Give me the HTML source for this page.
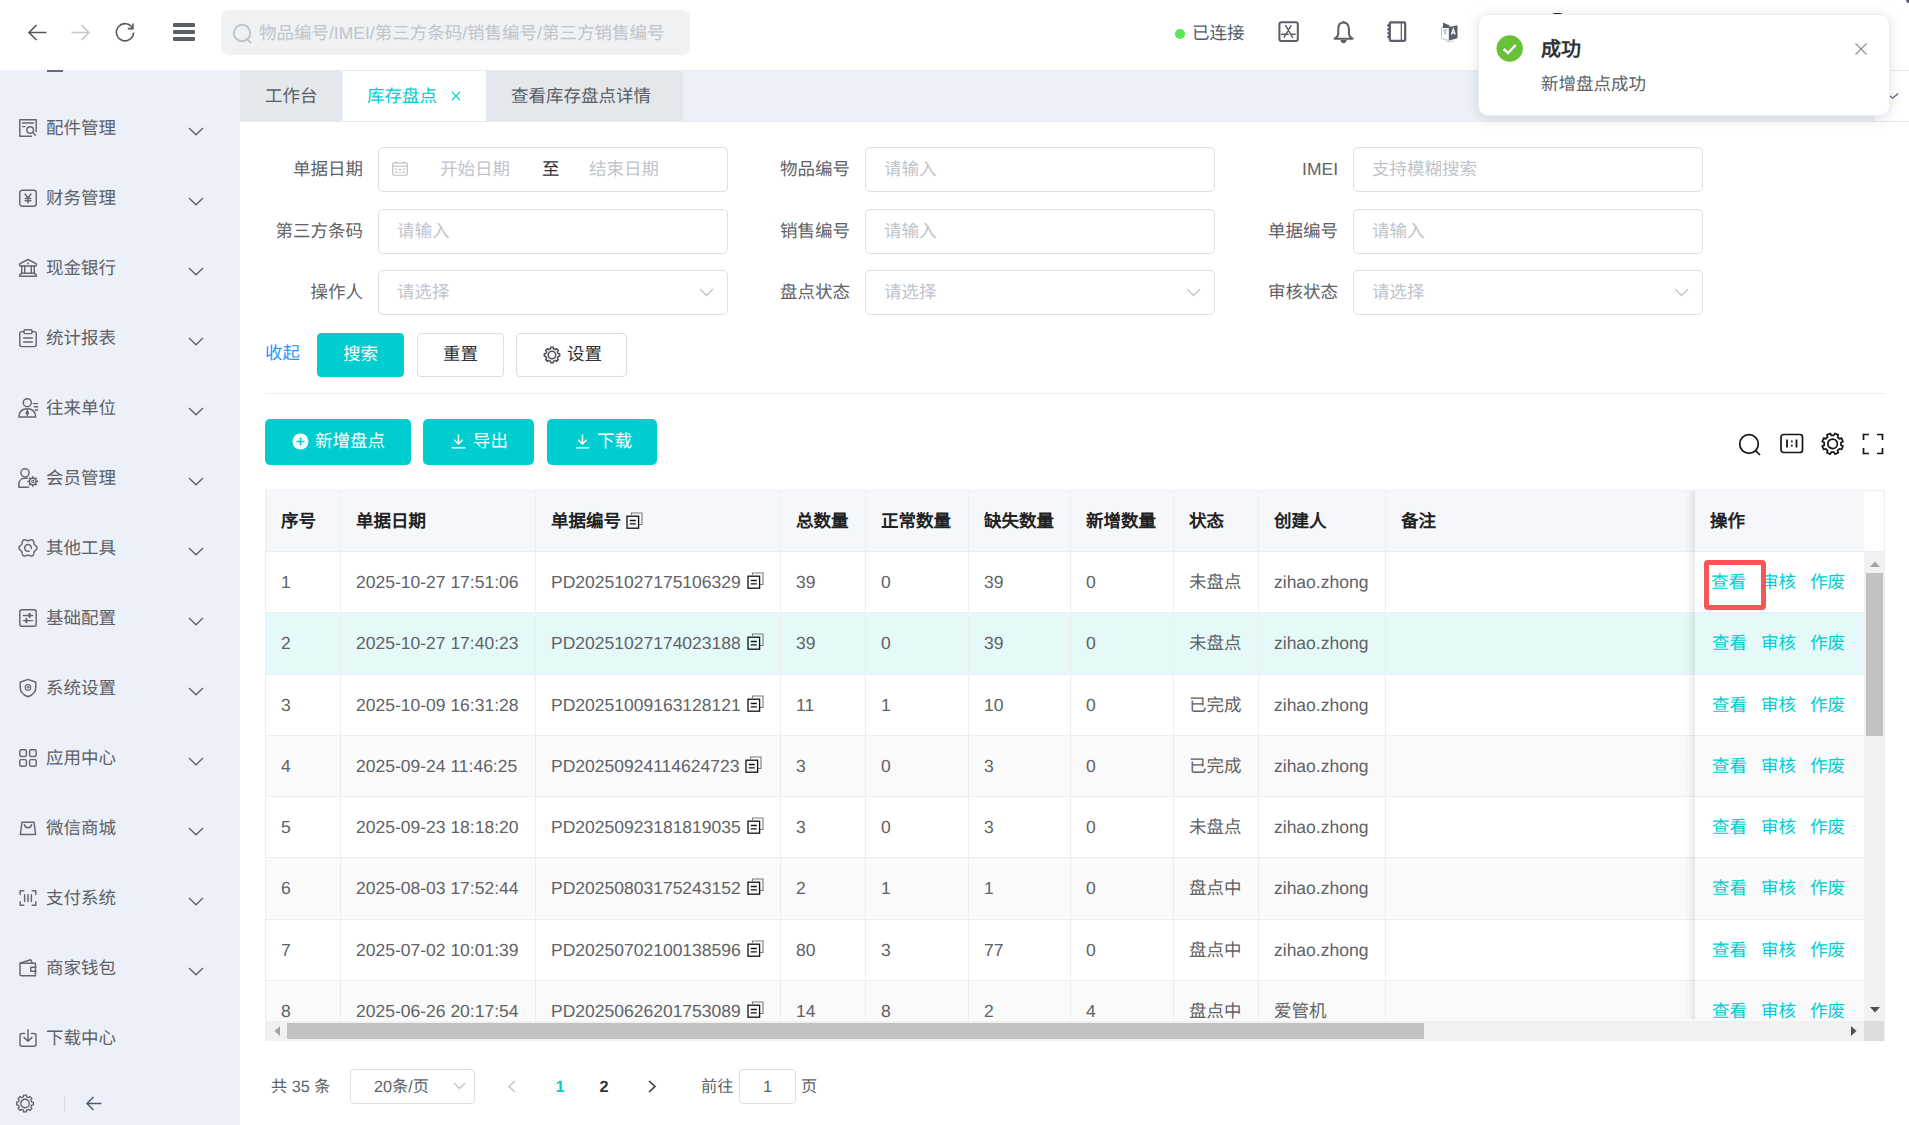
<!DOCTYPE html><html lang="zh-CN"><head><meta charset="utf-8"><title>page</title><style>
*{box-sizing:border-box;margin:0;padding:0}
html,body{width:1909px;height:1125px;overflow:hidden;background:#fff}
body{font-family:"Liberation Sans",sans-serif;font-size:17.5px;color:#606266;position:relative;text-rendering:geometricPrecision}
.abs{position:absolute}
svg{display:block;overflow:visible}
.nw{white-space:nowrap}
#top{position:absolute;left:0;top:0;width:1909px;height:70px;background:#fff}
#side{position:absolute;left:0;top:70px;width:240px;height:1055px;background:#ecf0f8}
#tabs{position:absolute;left:240px;top:70px;width:1669px;height:52px;background:#ecf0f8;border-top:1px solid #e9ebef;border-bottom:1px solid #e6e9ed}
.tab{position:absolute;top:0;height:50px;line-height:50px;font-size:17.5px;color:#595d66;background:#e4e8ed;white-space:nowrap}
.tab.act{background:#fff;color:#00cdd0}
.mi{position:absolute;left:0;width:240px;height:30px}
.mi .t{position:absolute;left:46px;top:0;line-height:30px;font-size:17.5px;color:#5d6066;white-space:nowrap}
.mi svg.ic{position:absolute;left:18px;top:5px}
.mi svg.ch{position:absolute;left:188px;top:13.500px}
.lbl{position:absolute;width:160px;text-align:right;font-size:17.5px;color:#606266;line-height:45px;white-space:nowrap}
.inp{position:absolute;width:350px;height:45px;border:1px solid #dcdfe6;border-radius:5px;background:#fff;font-size:17.5px;color:#c0c4cc;line-height:43px;padding-left:18px;white-space:nowrap}
.btn{position:absolute;top:333px;height:44px;border-radius:4px;font-size:17.5px;line-height:40px;white-space:nowrap}
.btn.pri{background:#00cdd0;color:#fff;border:1px solid #00cdd0}
.btn.def{background:#fff;color:#303133;border:1px solid #dcdfe6}
.btn2{position:absolute;top:419px;height:46px;border-radius:5px;background:#00cdd0;color:#fff;font-size:17.5px;line-height:45px;white-space:nowrap}
#tbl{position:absolute;left:265px;top:490px;width:1620px;height:551px;overflow:hidden;border:1px solid #ebeef5;border-bottom:none}
.row{position:absolute;left:0;width:1618px;border-bottom:1px solid #ebeef5;background:#fff}
.row.s{background:#fafafa}
.row.h{background:#e6f9f9}
.c{position:absolute;top:0;height:100%;border-left:1px solid #ebeef5;padding-left:15px;white-space:nowrap;color:#606266;overflow:hidden}
.c.f{border-left:none}
.hd{background:#f5f7fa !important}
.hd .c{color:#222;font-weight:bold;line-height:60px}
.bd .c{line-height:60px}
.lk{color:#00cdd0;position:absolute;top:0}
.cp{display:inline-block;vertical-align:-1px;margin-left:6px}
.pg{position:absolute;font-size:16.25px;line-height:35px;top:1070px;white-space:nowrap;color:#606266}
</style></head><body>
<div id="top">
<svg class="abs" style="left:28px;top:24px" width="19" height="17" viewBox="0 0 19 17"><path d="M18.5 8.5H1M8.500 1L1 8.500L8.500 16" fill="none" stroke="#56585e" stroke-width="1.600"/></svg>
<svg class="abs" style="left:71px;top:24px" width="19" height="17" viewBox="0 0 19 17"><path d="M0.5 8.500H18M10.500 1L18 8.500L10.500 16" fill="none" stroke="#c5c8ce" stroke-width="1.6"/></svg>
<svg class="abs" style="left:115px;top:22px" width="20" height="20" viewBox="0 0 20 20"><path d="M17.600 6.200A8.600 8.600 0 1 0 18.600 10.500" fill="none" stroke="#56585e" stroke-width="1.600"/><path d="M17.900 1.500V6.600H12.800" fill="none" stroke="#56585e" stroke-width="1.600"/></svg>
<div class="abs" style="left:173px;top:23px;width:22px;height:4px;background:#5a5e66;border-radius:1px"></div>
<div class="abs" style="left:173px;top:30px;width:22px;height:4px;background:#5a5e66;border-radius:1px"></div>
<div class="abs" style="left:173px;top:37px;width:22px;height:4px;background:#5a5e66;border-radius:1px"></div>
<div class="abs" style="left:221px;top:10px;width:469px;height:45px;background:#f0f1f3;border-radius:8px"></div>
<svg class="abs" style="left:232px;top:23px" width="22" height="22" viewBox="0 0 22 22"><circle cx="10" cy="10" r="8.200" fill="none" stroke="#c0c4cc" stroke-width="2"/><path d="M15.500 16.500L19 20" stroke="#c0c4cc" stroke-width="2" fill="none"/></svg>
<div class="abs nw" style="left:259px;top:11px;line-height:44px;font-size:17.5px;color:#c0c4cc">物品编号/IMEI/第三方条码/销售编号/第三方销售编号</div>
<div class="abs" style="left:1175px;top:29px;width:10px;height:10px;border-radius:5px;background:#55e955"></div>
<div class="abs nw" style="left:1192px;top:18px;line-height:30px;font-size:17.5px;color:#515a6e">已连接</div>
<svg class="abs" style="left:1278px;top:21px" width="21" height="21" viewBox="0 0 21 21"><g fill="none" stroke="#5a5e66" stroke-width="2" stroke-linejoin="round" stroke-linecap="round"><rect x="1.400" y="1.200" width="18.400" height="18.700" rx="2"/><path d="M7.700 4.600L14.500 16.100M13 4.600L6.200 16.100M3.500 13.300H10.200M13.200 13.300H17.200" stroke-width="1.500"/></g></svg>
<svg class="abs" style="left:1333px;top:21px" width="21" height="23" viewBox="0 0 21 23"><g fill="none" stroke="#5a5e66" stroke-width="2" stroke-linejoin="round" stroke-linecap="round"><path d="M10.600 1.600C6.800 1.600 5.300 4.800 5.300 8V12.800C5.300 14.800 3.800 16.300 1.600 17.700H19.600C17.400 16.300 15.900 14.800 15.900 12.800V8C15.900 4.800 14.400 1.600 10.600 1.600Z"/><path d="M10.600 0.500V1.500" stroke-width="1.600"/></g><path d="M7.400 19H13.800C13.300 21.300 12 22.300 10.600 22.300C9.200 22.300 7.900 21.300 7.400 19Z" fill="#5a5e66"/></svg>
<svg class="abs" style="left:1386px;top:21px" width="21" height="21" viewBox="0 0 21 21"><g fill="none" stroke="#5a5e66" stroke-width="2" stroke-linejoin="round" stroke-linecap="round"><rect x="3.800" y="1.300" width="15.400" height="18.500" rx="1" stroke-width="2.200"/><path d="M15.300 1.500V19.500" stroke-width="1.200"/></g><g fill="#5a5e66"><circle cx="2.600" cy="4.500" r="1.400"/><circle cx="2.600" cy="8.300" r="1.400"/><circle cx="2.600" cy="12.100" r="1.400"/><circle cx="2.600" cy="15.900" r="1.400"/></g></svg>
<svg class="abs" style="left:1440px;top:22px" width="19" height="20" viewBox="0 0 19 20"><path d="M1.500 5L9 3V18.500L1.500 16.500Z" fill="#fff" stroke="#c4c7ce" stroke-width="1"/><path d="M3 0.500L9.500 3.500V6H3Z" fill="#5a5e66"/><path d="M9 5L17.500 3.200V16.200L9 18.600Z" fill="#5a5e66"/><path d="M11.400 12.500L13.300 6.800L15.200 12.500M12 10.800H14.600" fill="none" stroke="#fff" stroke-width="1.200"/><path d="M3.200 8H7M5 7V8M3.600 12C5.200 11 6 9.500 6.200 8M3.800 9C4.400 10.500 5.400 11.500 6.800 12" fill="none" stroke="#a0a4ac" stroke-width="0.800"/><path d="M5 19C8 20 11 20 14 19" fill="none" stroke="#c4c7ce" stroke-width="0.800"/></svg>
<div class="abs" style="left:1552px;top:13px;width:11px;height:3px;border-radius:5px 5px 0 0;background:#2b2f3a"></div>
<div class="abs" style="left:1906px;top:0;width:3px;height:3px;border-radius:0 0 0 3px;background:#5a5e66"></div>
</div>
<div id="side">
<div class="abs" style="left:47px;top:0;width:16px;height:2px;background:#666a73"></div>
<div class="mi" style="top:43px"><svg class="ic" style="" width="20" height="20" viewBox="0 0 20 20"><g fill="none" stroke="#63676e" stroke-width="1.450" stroke-linejoin="round" stroke-linecap="round"><path d="M13.400 18.200H1.800V1.800H18.200V13.500"/><path d="M4.5 5H15.5"/><path d="M4.5 8.6H7"/><circle cx="12.2" cy="12" r="3.3"/><path d="M14.800 14.600L17.400 17.200"/></g></svg><div class="t">配件管理</div><svg class="ch" width="16" height="9" viewBox="0 0 16 9"><path d="M1 1L8 7.800L15 1" fill="none" stroke="#5d6066" stroke-width="1.300"/></svg></div>
<div class="mi" style="top:113px"><svg class="ic" style="" width="20" height="20" viewBox="0 0 20 20"><g fill="none" stroke="#63676e" stroke-width="1.450" stroke-linejoin="round" stroke-linecap="round"><rect x="1.8" y="2.2" width="16.4" height="16" rx="2.5"/><path d="M7 6L10 10L13 6M10 10V15M7.2 10.4H12.8M7.2 12.8H12.8"/></g></svg><div class="t">财务管理</div><svg class="ch" width="16" height="9" viewBox="0 0 16 9"><path d="M1 1L8 7.800L15 1" fill="none" stroke="#5d6066" stroke-width="1.300"/></svg></div>
<div class="mi" style="top:183px"><svg class="ic" style="" width="20" height="20" viewBox="0 0 20 20"><g fill="none" stroke="#63676e" stroke-width="1.450" stroke-linejoin="round" stroke-linecap="round"><path d="M10 1.500L2 5.700C1.100 6.200 1.300 7.900 2.400 8H17.600C18.700 7.900 18.900 6.200 18 5.700Z"/><path d="M3.700 7.800V15.200M6.700 7.800V15.200M13.300 7.800V15.200M16.300 7.800V15.200"/><path d="M3.700 15.200H16.300"/><path d="M3.700 15.300L1.700 16.800V18.300H18.300V16.800L16.300 15.300"/><path d="M10 5V5.800" stroke-width="1.600"/></g></svg><div class="t">现金银行</div><svg class="ch" width="16" height="9" viewBox="0 0 16 9"><path d="M1 1L8 7.800L15 1" fill="none" stroke="#5d6066" stroke-width="1.300"/></svg></div>
<div class="mi" style="top:253px"><svg class="ic" style="" width="20" height="20" viewBox="0 0 20 20"><g fill="none" stroke="#63676e" stroke-width="1.450" stroke-linejoin="round" stroke-linecap="round"><path d="M6 3.6H3.8C2.7 3.6 1.8 4.5 1.8 5.6V16.6C1.8 17.7 2.7 18.6 3.8 18.6H16.2C17.3 18.6 18.2 17.7 18.2 16.6V5.6C18.2 4.5 17.3 3.6 16.2 3.6H14"/><rect x="6" y="1.8" width="8" height="3.8" rx="0.8"/><path d="M5.6 10H14.4M5.6 14H14.4"/></g></svg><div class="t">统计报表</div><svg class="ch" width="16" height="9" viewBox="0 0 16 9"><path d="M1 1L8 7.800L15 1" fill="none" stroke="#5d6066" stroke-width="1.300"/></svg></div>
<div class="mi" style="top:323px"><svg class="ic" style="" width="20" height="20" viewBox="0 0 20 20"><g fill="none" stroke="#63676e" stroke-width="1.450" stroke-linejoin="round" stroke-linecap="round"><circle cx="9.3" cy="4.7" r="4"/><path d="M0.9 19C1.1 14 4.1 10.7 9.3 10.7C14.5 10.7 17.500 14 17.700 19Z"/><path d="M9.300 11.500V18M8 14.800L9.300 12.800L10.600 14.800L9.300 16.800Z" stroke-width="1.200"/><path d="M15.300 5.600H19.600M16.300 8.800H19.600M17.300 12H19.600"/></g></svg><div class="t">往来单位</div><svg class="ch" width="16" height="9" viewBox="0 0 16 9"><path d="M1 1L8 7.800L15 1" fill="none" stroke="#5d6066" stroke-width="1.300"/></svg></div>
<div class="mi" style="top:393px"><svg class="ic" style="" width="20" height="20" viewBox="0 0 20 20"><g fill="none" stroke="#63676e" stroke-width="1.450" stroke-linejoin="round" stroke-linecap="round"><circle cx="7" cy="4.800" r="4.100"/><path d="M10.400 19.200H0.900V16.200C0.900 12.800 3.300 10.300 6.800 10.300H9.200"/><circle cx="14.800" cy="13.400" r="3.300"/><circle cx="14.800" cy="13.400" r="1.100" stroke-width="1.100"/><path d="M14.800 8.800V10M14.800 16.800V18M10.200 13.400H11.400M18.200 13.400H19.400M11.550 10.150L12.400 11M17.200 15.800L18.050 16.650M11.550 16.650L12.400 15.800M17.200 11L18.050 10.150" stroke-width="1.700"/></g></svg><div class="t">会员管理</div><svg class="ch" width="16" height="9" viewBox="0 0 16 9"><path d="M1 1L8 7.800L15 1" fill="none" stroke="#5d6066" stroke-width="1.300"/></svg></div>
<div class="mi" style="top:463px"><svg class="ic" style="" width="20" height="20" viewBox="0 0 20 20"><g fill="none" stroke="#63676e" stroke-width="1.450" stroke-linejoin="round" stroke-linecap="round"><path d="M19.10 9.90L18.87 10.83L18.26 11.66L17.47 12.33L16.74 12.90L16.24 13.50L15.97 14.24L15.84 15.16L15.65 16.17L15.24 17.12L14.55 17.78L13.63 18.05L12.61 17.93L11.63 17.58L10.77 17.24L10.00 17.10L9.23 17.24L8.37 17.58L7.39 17.93L6.37 18.05L5.45 17.78L4.76 17.12L4.35 16.17L4.16 15.16L4.03 14.24L3.76 13.50L3.26 12.90L2.53 12.33L1.74 11.66L1.13 10.83L0.90 9.90L1.13 8.97L1.74 8.14L2.53 7.47L3.26 6.90L3.76 6.30L4.03 5.56L4.16 4.64L4.35 3.63L4.76 2.68L5.45 2.02L6.37 1.75L7.39 1.87L8.37 2.22L9.23 2.56L10.00 2.70L10.77 2.56L11.63 2.22L12.61 1.87L13.63 1.75L14.55 2.02L15.24 2.68L15.65 3.63L15.84 4.64L15.97 5.56L16.24 6.30L16.74 6.90L17.47 7.47L18.26 8.14L18.87 8.97Z"/><path d="M11.16 13.09A3.400 3.400 0 1 1 13.35 10.49"/></g></svg><div class="t">其他工具</div><svg class="ch" width="16" height="9" viewBox="0 0 16 9"><path d="M1 1L8 7.800L15 1" fill="none" stroke="#5d6066" stroke-width="1.300"/></svg></div>
<div class="mi" style="top:533px"><svg class="ic" style="" width="20" height="20" viewBox="0 0 20 20"><g fill="none" stroke="#63676e" stroke-width="1.450" stroke-linejoin="round" stroke-linecap="round"><rect x="1.8" y="1.8" width="16.4" height="16.4" rx="2"/><path d="M5.4 7.4H14.6M5.4 12.6H14.6"/><path d="M11.6 5.8V9M8.4 11V14.2" stroke-width="2.2"/></g></svg><div class="t">基础配置</div><svg class="ch" width="16" height="9" viewBox="0 0 16 9"><path d="M1 1L8 7.800L15 1" fill="none" stroke="#5d6066" stroke-width="1.300"/></svg></div>
<div class="mi" style="top:603px"><svg class="ic" style="" width="20" height="20" viewBox="0 0 20 20"><g fill="none" stroke="#63676e" stroke-width="1.450" stroke-linejoin="round" stroke-linecap="round"><path d="M10 1.4L17.8 4.2V9.4C17.8 14 14.6 17 10 18.8C5.400 17 2.2 14 2.2 9.4V4.200Z"/><circle cx="10" cy="9.400" r="2.8" stroke-width="1.1"/><circle cx="10" cy="9.400" r="0.9" stroke-width="1"/></g></svg><div class="t">系统设置</div><svg class="ch" width="16" height="9" viewBox="0 0 16 9"><path d="M1 1L8 7.800L15 1" fill="none" stroke="#5d6066" stroke-width="1.300"/></svg></div>
<div class="mi" style="top:673px"><svg class="ic" style="" width="20" height="20" viewBox="0 0 20 20"><g fill="none" stroke="#63676e" stroke-width="1.450" stroke-linejoin="round" stroke-linecap="round"><rect x="1.8" y="1.8" width="6.6" height="6.600" rx="1.4"/><rect x="11.6" y="1.8" width="6.6" height="6.6" rx="1.4"/><rect x="1.8" y="11.6" width="6.6" height="6.6" rx="1.4"/><rect x="11.6" y="11.6" width="6.6" height="6.6" rx="1.4"/></g></svg><div class="t">应用中心</div><svg class="ch" width="16" height="9" viewBox="0 0 16 9"><path d="M1 1L8 7.800L15 1" fill="none" stroke="#5d6066" stroke-width="1.300"/></svg></div>
<div class="mi" style="top:743px"><svg class="ic" style="" width="20" height="20" viewBox="0 0 20 20"><g fill="none" stroke="#63676e" stroke-width="1.450" stroke-linejoin="round" stroke-linecap="round"><path d="M4 4.200H16L17.600 16.400H2.400Z"/><path d="M6.400 6.800C7 8.800 8.200 9.800 10 9.800C11.800 9.800 13 8.800 13.600 6.800"/></g></svg><div class="t">微信商城</div><svg class="ch" width="16" height="9" viewBox="0 0 16 9"><path d="M1 1L8 7.800L15 1" fill="none" stroke="#5d6066" stroke-width="1.300"/></svg></div>
<div class="mi" style="top:813px"><svg class="ic" style="" width="20" height="20" viewBox="0 0 20 20"><g fill="none" stroke="#63676e" stroke-width="1.450" stroke-linejoin="round" stroke-linecap="round"><path d="M2.200 6.400V2.800H5.800M14.200 2.800H17.800V6.400M17.800 13.600V17.200H14.200M5.800 17.200H2.200V13.600"/><path d="M6.600 6.600V13.400M10 6.600V13.400M13.400 6.600V13.400"/></g></svg><div class="t">支付系统</div><svg class="ch" width="16" height="9" viewBox="0 0 16 9"><path d="M1 1L8 7.800L15 1" fill="none" stroke="#5d6066" stroke-width="1.300"/></svg></div>
<div class="mi" style="top:883px"><svg class="ic" style="" width="20" height="20" viewBox="0 0 20 20"><g fill="none" stroke="#63676e" stroke-width="1.450" stroke-linejoin="round" stroke-linecap="round"><path d="M2 5.200H17.400V17.800H3.400C2.600 17.800 2 17.200 2 16.400Z"/><path d="M2.400 5L12.800 1.800L14.200 5"/><path d="M18 9.200H12.800V13.200H18"/></g></svg><div class="t">商家钱包</div><svg class="ch" width="16" height="9" viewBox="0 0 16 9"><path d="M1 1L8 7.800L15 1" fill="none" stroke="#5d6066" stroke-width="1.300"/></svg></div>
<div class="mi" style="top:953px"><svg class="ic" style="" width="20" height="20" viewBox="0 0 20 20"><g fill="none" stroke="#63676e" stroke-width="1.450" stroke-linejoin="round" stroke-linecap="round"><path d="M6.600 5.400H4C2.900 5.400 2 6.300 2 7.400V16.200C2 17.300 2.900 18.200 4 18.200H16C17.100 18.200 18 17.300 18 16.200V7.400C18 6.300 17.100 5.400 16 5.400H13.400"/><path d="M10 1.800V13M6 9.400L10 13.200L14 9.400"/></g></svg><div class="t">下载中心</div></div>
<svg class="abs" style="left:15px;top:1023px" width="20" height="20" viewBox="0 0 20 20"><path d="M8.54 2.13L11.46 2.13L11.59 3.89L13.55 4.70L14.89 3.55L16.95 5.61L15.80 6.95L16.61 8.91L18.37 9.04L18.37 11.96L16.61 12.09L15.80 14.05L16.95 15.39L14.89 17.45L13.55 16.30L11.59 17.11L11.46 18.87L8.54 18.87L8.41 17.11L6.45 16.30L5.11 17.45L3.05 15.39L4.20 14.05L3.39 12.09L1.63 11.96L1.63 9.04L3.39 8.91L4.20 6.95L3.05 5.61L5.11 3.55L6.45 4.70L8.41 3.89Z" fill="none" stroke="#5c6068" stroke-width="1.3" stroke-linejoin="round"/><circle cx="10" cy="10.5" r="4.25" fill="none" stroke="#5c6068" stroke-width="1.3"/></svg>
<div class="abs" style="left:64px;top:1027px;width:1px;height:14px;background:#d5d9e2"></div>
<svg class="abs" style="left:86px;top:1026px" width="16" height="15" viewBox="0 0 16 15"><path d="M15.500 7.500H1M7.500 1L1 7.500L7.500 14" fill="none" stroke="#515a6e" stroke-width="1.5"/></svg>
</div>
<div id="tabs">
<div class="tab" style="left:0;width:102px;padding-left:25px">工作台</div>
<div class="tab act" style="left:103px;width:143px;padding-left:24px">库存盘点<svg class="abs" style="left:108px;top:20px" width="10" height="10" viewBox="0 0 10 10"><path d="M1 1L9 9M9 1L1 9" stroke="#00cdd0" stroke-width="1.100"/></svg></div>
<div class="tab" style="left:246px;width:197px;padding-left:25px">查看库存盘点详情</div>
<div class="abs" style="left:1635px;top:0;width:34px;height:50px;background:#fff"></div>
<svg class="abs" style="left:1647px;top:21.500px" width="12" height="6" viewBox="0 0 12 6"><path d="M0 0.500L5.600 5.100L11.200 0.500" fill="none" stroke="#56607a" stroke-width="1.200"/></svg>
</div>
<div class="lbl" style="left:203px;top:147px">单据日期</div>
<div class="inp" style="left:378px;top:147px"><svg class="abs" style="left:13px;top:13px" width="16" height="15" viewBox="0 0 17 16"><g fill="none" stroke="#c0c4cc" stroke-width="1.3"><rect x="0.7" y="2" width="15.600" height="13.200" rx="1"/><path d="M0.700 5.800H16.300M4.500 0.500V3.200M12.500 0.500V3.200"/><path d="M3.500 8.800H5.500M7.500 8.800H9.500M11.500 8.800H13.500M3.500 12H5.500M7.500 12H9.500M11.500 12H13.500" stroke-width="1.5"/></g></svg><div class="abs" style="left:61px;top:0">开始日期</div><div class="abs" style="left:163px;top:0;color:#303133">至</div><div class="abs" style="left:210px;top:0">结束日期</div></div>
<div class="lbl" style="left:690px;top:147px">物品编号</div>
<div class="inp" style="left:865px;top:147px">请输入</div>
<div class="lbl" style="left:1178px;top:147px">IMEI</div>
<div class="inp" style="left:1353px;top:147px">支持模糊搜索</div>
<div class="lbl" style="left:203px;top:209px">第三方条码</div>
<div class="inp" style="left:378px;top:209px">请输入</div>
<div class="lbl" style="left:690px;top:209px">销售编号</div>
<div class="inp" style="left:865px;top:209px">请输入</div>
<div class="lbl" style="left:1178px;top:209px">单据编号</div>
<div class="inp" style="left:1353px;top:209px">请输入</div>
<div class="lbl" style="left:203px;top:270px">操作人</div>
<div class="inp" style="left:378px;top:270px">请选择<svg class="abs" style="left:320px;top:17px" width="15" height="9" viewBox="0 0 15 9"><path d="M1 1L7.500 7.500L14 1" fill="none" stroke="#c0c4cc" stroke-width="1.4"/></svg></div>
<div class="lbl" style="left:690px;top:270px">盘点状态</div>
<div class="inp" style="left:865px;top:270px">请选择<svg class="abs" style="left:320px;top:17px" width="15" height="9" viewBox="0 0 15 9"><path d="M1 1L7.500 7.500L14 1" fill="none" stroke="#c0c4cc" stroke-width="1.4"/></svg></div>
<div class="lbl" style="left:1178px;top:270px">审核状态</div>
<div class="inp" style="left:1353px;top:270px">请选择<svg class="abs" style="left:320px;top:17px" width="15" height="9" viewBox="0 0 15 9"><path d="M1 1L7.500 7.500L14 1" fill="none" stroke="#c0c4cc" stroke-width="1.4"/></svg></div>
<div class="abs nw" style="left:265px;top:333px;line-height:40px;color:#2b95ff;font-size:17.5px">收起</div>
<div class="btn pri" style="left:317px;width:87px;text-align:center">搜索</div>
<div class="btn def" style="left:417px;width:87px;text-align:center">重置</div>
<div class="btn def" style="left:516px;width:111px;padding-left:50px">设置<svg class="abs" style="left:26px;top:12px" width="18" height="18" viewBox="0 0 18 18"><path d="M7.66 1.32L10.34 1.32L10.46 2.93L12.26 3.68L13.49 2.62L15.38 4.51L14.32 5.74L15.07 7.54L16.68 7.66L16.68 10.34L15.07 10.46L14.32 12.26L15.38 13.49L13.49 15.38L12.26 14.32L10.46 15.07L10.34 16.68L7.66 16.68L7.54 15.07L5.74 14.32L4.51 15.38L2.62 13.49L3.68 12.26L2.93 10.46L1.32 10.34L1.32 7.66L2.93 7.54L3.68 5.74L2.62 4.51L4.51 2.62L5.74 3.68L7.54 2.93Z" fill="none" stroke="#4a4d55" stroke-width="1.5" stroke-linejoin="round"/><circle cx="9" cy="9" r="3.74" fill="none" stroke="#4a4d55" stroke-width="1.5"/></svg></div>
<div class="abs" style="left:265px;top:393px;width:1620px;height:1px;background:#ebeef5"></div>
<div class="btn2" style="left:265px;width:146px;padding-left:50px">新增盘点<svg class="abs" style="left:27px;top:14px" width="17" height="17" viewBox="0 0 17 17"><circle cx="8.500" cy="8.500" r="8" fill="#fff"/><path d="M8.500 4.500V12.500M4.500 8.500H12.500" stroke="#00cdd0" stroke-width="1.600"/></svg></div>
<div class="btn2" style="left:423px;width:111px;padding-left:50px">导出<svg class="abs" style="left:28px;top:15px" width="15" height="15" viewBox="0 0 15 15"><path d="M7.500 0.500V10M3.300 5.800L7.500 10L11.700 5.800M0.800 13.800H14.200" fill="none" stroke="#fff" stroke-width="1.400"/></svg></div>
<div class="btn2" style="left:547px;width:110px;padding-left:50px">下载<svg class="abs" style="left:28px;top:15px" width="15" height="15" viewBox="0 0 15 15"><path d="M7.500 0.500V10M3.300 5.800L7.500 10L11.700 5.800M0.800 13.800H14.200" fill="none" stroke="#fff" stroke-width="1.400"/></svg></div>
<svg class="abs" style="left:1738px;top:433px" width="24" height="24" viewBox="0 0 24 24"><g fill="none" stroke="#151515" stroke-width="1.700"><circle cx="11" cy="11" r="9.300"/><path d="M17.600 17.600L22 22"/></g></svg>
<svg class="abs" style="left:1780px;top:433px" width="24" height="22" viewBox="0 0 24 22"><g fill="none" stroke="#151515" stroke-width="1.700"><rect x="1" y="1.500" width="21.500" height="18" rx="2.500"/><path d="M7 6.500V14.500M16.500 6.500V14.500" stroke-width="1.800"/><path d="M11.800 7.500V9.300M11.800 11.700V13.500" stroke-width="1.800"/></g></svg>
<svg class="abs" style="left:1821px;top:432px" width="24" height="24" viewBox="0 0 24 24"><path d="M13.91 1.46L17.28 2.85L16.58 4.94L18.46 6.82L20.55 6.12L21.94 9.49L19.98 10.47L19.98 13.13L21.94 14.11L20.55 17.48L18.46 16.78L16.58 18.66L17.28 20.75L13.91 22.14L12.93 20.18L10.27 20.18L9.29 22.14L5.92 20.75L6.62 18.66L4.74 16.78L2.65 17.48L1.26 14.11L3.22 13.13L3.22 10.47L1.26 9.49L2.65 6.12L4.74 6.82L6.62 4.94L5.92 2.85L9.29 1.46L10.27 3.42L12.93 3.42Z" fill="none" stroke="#151515" stroke-width="1.7" stroke-linejoin="round"/><circle cx="11.6" cy="11.8" r="4.77" fill="none" stroke="#151515" stroke-width="1.7"/></svg>
<svg class="abs" style="left:1862px;top:433px" width="22" height="22" viewBox="0 0 22 22"><g fill="none" stroke="#151515" stroke-width="1.700"><path d="M1.500 7V1.500H7M15 1.500H20.500V7M20.500 15V20.500H15M7 20.500H1.500V15"/></g></svg>
<div id="tbl">
<div class="row hd" style="top:0;height:61px">
<div class="c f" style="left:0px;width:75px">序号</div>
<div class="c" style="left:74px;width:195px">单据日期</div>
<div class="c" style="left:269px;width:245px">单据编号<svg class="abs" style="left:90px;top:21px" width="17" height="17" viewBox="0 0 17 17"><path d="M5.500 3V1H16V12.500H13" fill="none" stroke="#777a80" stroke-width="1.100"/><rect x="1" y="4.200" width="11.600" height="12" fill="#f5f7fa" stroke="#111" stroke-width="1.300"/><path d="M3.800 8.500H9.800M3.800 11.900H9.800" stroke="#111" stroke-width="1.300"/></svg></div>
<div class="c" style="left:514px;width:85px">总数量</div>
<div class="c" style="left:599px;width:103px">正常数量</div>
<div class="c" style="left:702px;width:102px">缺失数量</div>
<div class="c" style="left:804px;width:103px">新增数量</div>
<div class="c" style="left:907px;width:85px">状态</div>
<div class="c" style="left:992px;width:127px">创建人</div>
<div class="c" style="left:1119px;width:310px">备注</div>
</div>
<div class="row bd" style="top:61px;height:61px">
<div class="c f" style="left:0px;width:75px">1</div>
<div class="c" style="left:74px;width:195px">2025-10-27 17:51:06</div>
<div class="c" style="left:269px;width:245px">PD20251027175106329<svg class="cp" width="17" height="17" viewBox="0 0 17 17"><path d="M5.500 3V1H16V12.500H13" fill="none" stroke="#777a80" stroke-width="1.100"/><rect x="1" y="4.200" width="11.600" height="12" fill="none" stroke="#111" stroke-width="1.300"/><path d="M3.800 8.500H9.800M3.800 11.900H9.800" stroke="#111" stroke-width="1.300"/></svg></div>
<div class="c" style="left:514px;width:85px">39</div>
<div class="c" style="left:599px;width:103px">0</div>
<div class="c" style="left:702px;width:102px">39</div>
<div class="c" style="left:804px;width:103px">0</div>
<div class="c" style="left:907px;width:85px">未盘点</div>
<div class="c" style="left:992px;width:127px">zihao.zhong</div>
<div class="c" style="left:1119px;width:310px"></div>
</div>
<div class="row bd h" style="top:122px;height:62px">
<div class="c f" style="left:0px;width:75px">2</div>
<div class="c" style="left:74px;width:195px">2025-10-27 17:40:23</div>
<div class="c" style="left:269px;width:245px">PD20251027174023188<svg class="cp" width="17" height="17" viewBox="0 0 17 17"><path d="M5.500 3V1H16V12.500H13" fill="none" stroke="#777a80" stroke-width="1.100"/><rect x="1" y="4.200" width="11.600" height="12" fill="none" stroke="#111" stroke-width="1.300"/><path d="M3.800 8.500H9.800M3.800 11.900H9.800" stroke="#111" stroke-width="1.300"/></svg></div>
<div class="c" style="left:514px;width:85px">39</div>
<div class="c" style="left:599px;width:103px">0</div>
<div class="c" style="left:702px;width:102px">39</div>
<div class="c" style="left:804px;width:103px">0</div>
<div class="c" style="left:907px;width:85px">未盘点</div>
<div class="c" style="left:992px;width:127px">zihao.zhong</div>
<div class="c" style="left:1119px;width:310px"></div>
</div>
<div class="row bd" style="top:184px;height:61px">
<div class="c f" style="left:0px;width:75px">3</div>
<div class="c" style="left:74px;width:195px">2025-10-09 16:31:28</div>
<div class="c" style="left:269px;width:245px">PD20251009163128121<svg class="cp" width="17" height="17" viewBox="0 0 17 17"><path d="M5.500 3V1H16V12.500H13" fill="none" stroke="#777a80" stroke-width="1.100"/><rect x="1" y="4.200" width="11.600" height="12" fill="none" stroke="#111" stroke-width="1.300"/><path d="M3.800 8.500H9.800M3.800 11.900H9.800" stroke="#111" stroke-width="1.300"/></svg></div>
<div class="c" style="left:514px;width:85px">11</div>
<div class="c" style="left:599px;width:103px">1</div>
<div class="c" style="left:702px;width:102px">10</div>
<div class="c" style="left:804px;width:103px">0</div>
<div class="c" style="left:907px;width:85px">已完成</div>
<div class="c" style="left:992px;width:127px">zihao.zhong</div>
<div class="c" style="left:1119px;width:310px"></div>
</div>
<div class="row bd s" style="top:245px;height:61px">
<div class="c f" style="left:0px;width:75px">4</div>
<div class="c" style="left:74px;width:195px">2025-09-24 11:46:25</div>
<div class="c" style="left:269px;width:245px">PD20250924114624723<svg class="cp" width="17" height="17" viewBox="0 0 17 17"><path d="M5.500 3V1H16V12.500H13" fill="none" stroke="#777a80" stroke-width="1.100"/><rect x="1" y="4.200" width="11.600" height="12" fill="none" stroke="#111" stroke-width="1.300"/><path d="M3.800 8.500H9.800M3.800 11.900H9.800" stroke="#111" stroke-width="1.300"/></svg></div>
<div class="c" style="left:514px;width:85px">3</div>
<div class="c" style="left:599px;width:103px">0</div>
<div class="c" style="left:702px;width:102px">3</div>
<div class="c" style="left:804px;width:103px">0</div>
<div class="c" style="left:907px;width:85px">已完成</div>
<div class="c" style="left:992px;width:127px">zihao.zhong</div>
<div class="c" style="left:1119px;width:310px"></div>
</div>
<div class="row bd" style="top:306px;height:61px">
<div class="c f" style="left:0px;width:75px">5</div>
<div class="c" style="left:74px;width:195px">2025-09-23 18:18:20</div>
<div class="c" style="left:269px;width:245px">PD20250923181819035<svg class="cp" width="17" height="17" viewBox="0 0 17 17"><path d="M5.500 3V1H16V12.500H13" fill="none" stroke="#777a80" stroke-width="1.100"/><rect x="1" y="4.200" width="11.600" height="12" fill="none" stroke="#111" stroke-width="1.300"/><path d="M3.800 8.500H9.800M3.800 11.900H9.800" stroke="#111" stroke-width="1.300"/></svg></div>
<div class="c" style="left:514px;width:85px">3</div>
<div class="c" style="left:599px;width:103px">0</div>
<div class="c" style="left:702px;width:102px">3</div>
<div class="c" style="left:804px;width:103px">0</div>
<div class="c" style="left:907px;width:85px">未盘点</div>
<div class="c" style="left:992px;width:127px">zihao.zhong</div>
<div class="c" style="left:1119px;width:310px"></div>
</div>
<div class="row bd s" style="top:367px;height:62px">
<div class="c f" style="left:0px;width:75px">6</div>
<div class="c" style="left:74px;width:195px">2025-08-03 17:52:44</div>
<div class="c" style="left:269px;width:245px">PD20250803175243152<svg class="cp" width="17" height="17" viewBox="0 0 17 17"><path d="M5.500 3V1H16V12.500H13" fill="none" stroke="#777a80" stroke-width="1.100"/><rect x="1" y="4.200" width="11.600" height="12" fill="none" stroke="#111" stroke-width="1.300"/><path d="M3.800 8.500H9.800M3.800 11.900H9.800" stroke="#111" stroke-width="1.300"/></svg></div>
<div class="c" style="left:514px;width:85px">2</div>
<div class="c" style="left:599px;width:103px">1</div>
<div class="c" style="left:702px;width:102px">1</div>
<div class="c" style="left:804px;width:103px">0</div>
<div class="c" style="left:907px;width:85px">盘点中</div>
<div class="c" style="left:992px;width:127px">zihao.zhong</div>
<div class="c" style="left:1119px;width:310px"></div>
</div>
<div class="row bd" style="top:429px;height:61px">
<div class="c f" style="left:0px;width:75px">7</div>
<div class="c" style="left:74px;width:195px">2025-07-02 10:01:39</div>
<div class="c" style="left:269px;width:245px">PD20250702100138596<svg class="cp" width="17" height="17" viewBox="0 0 17 17"><path d="M5.500 3V1H16V12.500H13" fill="none" stroke="#777a80" stroke-width="1.100"/><rect x="1" y="4.200" width="11.600" height="12" fill="none" stroke="#111" stroke-width="1.300"/><path d="M3.800 8.500H9.800M3.800 11.900H9.800" stroke="#111" stroke-width="1.300"/></svg></div>
<div class="c" style="left:514px;width:85px">80</div>
<div class="c" style="left:599px;width:103px">3</div>
<div class="c" style="left:702px;width:102px">77</div>
<div class="c" style="left:804px;width:103px">0</div>
<div class="c" style="left:907px;width:85px">盘点中</div>
<div class="c" style="left:992px;width:127px">zihao.zhong</div>
<div class="c" style="left:1119px;width:310px"></div>
</div>
<div class="row bd s" style="top:490px;height:61px">
<div class="c f" style="left:0px;width:75px">8</div>
<div class="c" style="left:74px;width:195px">2025-06-26 20:17:54</div>
<div class="c" style="left:269px;width:245px">PD20250626201753089<svg class="cp" width="17" height="17" viewBox="0 0 17 17"><path d="M5.500 3V1H16V12.500H13" fill="none" stroke="#777a80" stroke-width="1.100"/><rect x="1" y="4.200" width="11.600" height="12" fill="none" stroke="#111" stroke-width="1.300"/><path d="M3.800 8.500H9.800M3.800 11.900H9.800" stroke="#111" stroke-width="1.300"/></svg></div>
<div class="c" style="left:514px;width:85px">14</div>
<div class="c" style="left:599px;width:103px">8</div>
<div class="c" style="left:702px;width:102px">2</div>
<div class="c" style="left:804px;width:103px">4</div>
<div class="c" style="left:907px;width:85px">盘点中</div>
<div class="c" style="left:992px;width:127px">爱管机</div>
<div class="c" style="left:1119px;width:310px"></div>
</div>
<div class="abs" style="left:1418px;top:0;width:11px;height:528px;background:linear-gradient(to right,rgba(0,0,0,0),rgba(0,0,0,0.025) 45%,rgba(0,0,0,0.085))"></div>
<div class="abs" style="left:1429px;top:0;width:169px;height:528px;background:#fff;overflow:hidden">
<div class="abs nw" style="left:0;top:0;width:169px;height:61px;background:#f5f7fa;border-bottom:1px solid #ebeef5;line-height:60px;padding-left:15px;color:#222;font-weight:bold">操作</div>
<div class="abs nw" style="left:0;top:61px;width:169px;height:61px;background:#fff;border-bottom:1px solid #ebeef5;line-height:60px"><span class="lk" style="left:17px">查看</span><span class="lk" style="left:66px">审核</span><span class="lk" style="left:115px">作废</span></div>
<div class="abs nw" style="left:0;top:122px;width:169px;height:62px;background:#e6f9f9;border-bottom:1px solid #ebeef5;line-height:60px"><span class="lk" style="left:17px">查看</span><span class="lk" style="left:66px">审核</span><span class="lk" style="left:115px">作废</span></div>
<div class="abs nw" style="left:0;top:184px;width:169px;height:61px;background:#fff;border-bottom:1px solid #ebeef5;line-height:60px"><span class="lk" style="left:17px">查看</span><span class="lk" style="left:66px">审核</span><span class="lk" style="left:115px">作废</span></div>
<div class="abs nw" style="left:0;top:245px;width:169px;height:61px;background:#fafafa;border-bottom:1px solid #ebeef5;line-height:60px"><span class="lk" style="left:17px">查看</span><span class="lk" style="left:66px">审核</span><span class="lk" style="left:115px">作废</span></div>
<div class="abs nw" style="left:0;top:306px;width:169px;height:61px;background:#fff;border-bottom:1px solid #ebeef5;line-height:60px"><span class="lk" style="left:17px">查看</span><span class="lk" style="left:66px">审核</span><span class="lk" style="left:115px">作废</span></div>
<div class="abs nw" style="left:0;top:367px;width:169px;height:62px;background:#fafafa;border-bottom:1px solid #ebeef5;line-height:60px"><span class="lk" style="left:17px">查看</span><span class="lk" style="left:66px">审核</span><span class="lk" style="left:115px">作废</span></div>
<div class="abs nw" style="left:0;top:429px;width:169px;height:61px;background:#fff;border-bottom:1px solid #ebeef5;line-height:60px"><span class="lk" style="left:17px">查看</span><span class="lk" style="left:66px">审核</span><span class="lk" style="left:115px">作废</span></div>
<div class="abs nw" style="left:0;top:490px;width:169px;height:61px;background:#fafafa;border-bottom:1px solid #ebeef5;line-height:60px"><span class="lk" style="left:17px">查看</span><span class="lk" style="left:66px">审核</span><span class="lk" style="left:115px">作废</span></div>
</div>
<div class="abs" style="left:1598px;top:0;width:21px;height:61px;background:#fff;border-bottom:1px solid #ebeef5"></div>
<div class="abs" style="left:1598px;top:61px;width:21px;height:469px;background:#f1f1f1"></div>
<div class="abs" style="left:1600px;top:82px;width:17px;height:163px;background:#c1c1c1"></div>
<svg class="abs" style="left:1604px;top:70px" width="10" height="6" viewBox="0 0 10 6"><path d="M0 6L5 0.500L10 6Z" fill="#a3a3a3"/></svg>
<svg class="abs" style="left:1604px;top:516px" width="10" height="6" viewBox="0 0 10 6"><path d="M0 0L5 5.500L10 0Z" fill="#505050"/></svg>
<div class="abs" style="left:-1px;top:530px;width:1620px;height:19.500px;background:#f1f1f1"></div>
<div class="abs" style="left:21px;top:532px;width:1137px;height:15.500px;background:#c1c1c1"></div>
<svg class="abs" style="left:8px;top:535px" width="6" height="10" viewBox="0 0 6 10"><path d="M6 0L0.500 5L6 10Z" fill="#a3a3a3"/></svg>
<svg class="abs" style="left:1585px;top:535px" width="6" height="10" viewBox="0 0 6 10"><path d="M0 0L5.500 5L0 10Z" fill="#505050"/></svg>
<div class="abs" style="left:1598px;top:530px;width:21px;height:19.500px;background:#dcdcdc"></div>
</div>
<div class="abs" style="left:1704px;top:560px;width:62px;height:50px;border:5px solid #f85556;border-radius:4px;background:#fff"></div>
<div class="abs nw" style="left:1711px;top:552px;line-height:60px;color:#00cdd0">查看</div>
<div class="pg" style="left:271px">共 35 条</div>
<div class="abs" style="left:350px;top:1069px;width:125px;height:35px;border:1px solid #dcdfe6;border-radius:4px"></div>
<div class="pg" style="left:374px">20条/页</div>
<svg class="abs" style="left:453px;top:1082px" width="13" height="8" viewBox="0 0 13 8"><path d="M1 1L6.500 6.500L12 1" fill="none" stroke="#c0c4cc" stroke-width="1.300"/></svg>
<svg class="abs" style="left:507px;top:1080px" width="9" height="13" viewBox="0 0 9 13"><path d="M8 1L2 6.500L8 12" fill="none" stroke="#c0c4cc" stroke-width="1.500"/></svg>
<div class="pg" style="left:540px;width:40px;text-align:center;font-weight:bold;color:#00cdd0">1</div>
<div class="pg" style="left:584px;width:40px;text-align:center;font-weight:bold;color:#303133">2</div>
<svg class="abs" style="left:648px;top:1080px" width="9" height="13" viewBox="0 0 9 13"><path d="M1 1L7 6.500L1 12" fill="none" stroke="#303133" stroke-width="1.500"/></svg>
<div class="pg" style="left:701px">前往</div>
<div class="abs" style="left:739px;top:1069px;width:57px;height:35px;border:1px solid #dcdfe6;border-radius:4px"></div>
<div class="pg" style="left:739px;width:57px;text-align:center">1</div>
<div class="pg" style="left:801px">页</div>
<div class="abs" style="left:1478px;top:14px;width:412px;height:102px;background:#fff;border-radius:10px;border:1px solid #ebeef5;box-shadow:0 2px 14px rgba(0,0,0,0.13)">
<svg class="abs" style="left:17px;top:20px" width="28" height="28" viewBox="0 0 28 28"><circle cx="13.700" cy="13.500" r="13.200" fill="#67c23a"/><path d="M7.700 14L12 18L19.700 10" fill="none" stroke="#fff" stroke-width="2.400"/></svg>
<div class="abs nw" style="left:62px;top:20px;line-height:30px;font-size:20px;font-weight:bold;color:#303133">成功</div>
<div class="abs nw" style="left:62px;top:55px;line-height:28px;font-size:17.5px;color:#606266">新增盘点成功</div>
<svg class="abs" style="left:376px;top:28px" width="12" height="12" viewBox="0 0 12 12"><path d="M0.500 0.500L11.500 11.500M11.500 0.500L0.500 11.500" stroke="#909399" stroke-width="1.300"/></svg>
</div>
</body></html>
